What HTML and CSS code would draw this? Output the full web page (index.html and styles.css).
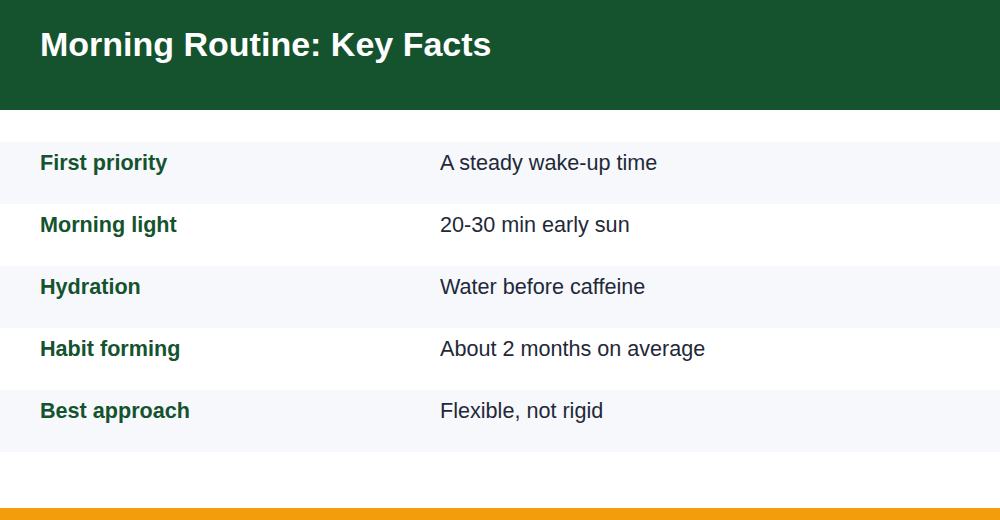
FILE: index.html
```html
<!DOCTYPE html>
<html>
<head>
<meta charset="utf-8">
<link rel="stylesheet" href="styles.css">
</head>
<body>
<div class="page">
  <header class="header">
    <h1 class="title">Morning Routine: Key Facts</h1>
  </header>
  <main class="facts">
    <div class="row alt"><div class="label">First priority</div><div class="value">A steady wake-up time</div></div>
    <div class="row"><div class="label">Morning light</div><div class="value">20-30 min early sun</div></div>
    <div class="row alt"><div class="label">Hydration</div><div class="value">Water before caffeine</div></div>
    <div class="row"><div class="label">Habit forming</div><div class="value">About 2 months on average</div></div>
    <div class="row alt"><div class="label">Best approach</div><div class="value">Flexible, not rigid</div></div>
  </main>
  <footer class="bar"></footer>
</div>
</body>
</html>
```

FILE: styles.css
```css
html, body {
  margin: 0;
  padding: 0;
  background: #ffffff;
}
.page {
  width: 1000px;
  height: 520px;
  display: flex;
  flex-direction: column;
  font-family: "Liberation Sans", Arial, sans-serif;
}
.header {
  height: 110px;
  box-sizing: border-box;
  background: #15532f;
  padding: 25px 40px 0;
}
.title {
  margin: 0;
  color: #ffffff;
  font-size: 34px;
  font-weight: 700;
  line-height: 39px;
}
.facts {
  margin-top: 32px;
  display: flex;
  flex-direction: column;
}
.row {
  height: 62px;
  box-sizing: border-box;
  padding: 8px 40px 0;
  display: grid;
  grid-template-columns: 400px 1fr;
  font-size: 21.6px;
  line-height: 25px;
}
.row.alt {
  background: #f6f8fc;
}
.label {
  color: #15532f;
  font-weight: 700;
}
.value {
  color: #1f2937;
}
.bar {
  margin-top: auto;
  height: 12px;
  background: #f39c0c;
}
```
